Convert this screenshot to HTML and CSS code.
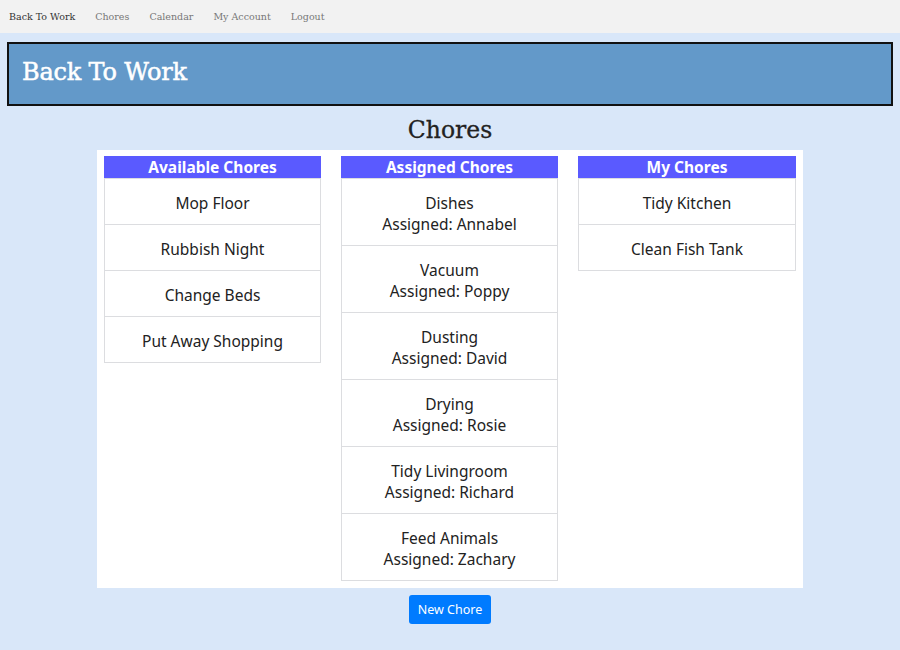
FILE: index.html
```html
<!DOCTYPE html>
<html lang="en">
<head>
<meta charset="utf-8">
<title>Back To Work</title>
<link rel="stylesheet" href="styles.css">
</head>
<body>
<nav class="navbar">
  <a class="brand" href="#">Back To Work</a>
  <a class="nav-link" href="#">Chores</a>
  <a class="nav-link" href="#">Calendar</a>
  <a class="nav-link" href="#">My Account</a>
  <a class="nav-link" href="#">Logout</a>
</nav>
<header class="banner">
  <h1>Back To Work</h1>
</header>
<h2 class="page-title">Chores</h2>
<main class="board">
  <section class="column">
    <h3 class="col-head">Available Chores</h3>
    <ul class="list">
      <li>Mop Floor</li>
      <li>Rubbish Night</li>
      <li>Change Beds</li>
      <li>Put Away Shopping</li>
    </ul>
  </section>
  <section class="column">
    <h3 class="col-head">Assigned Chores</h3>
    <ul class="list">
      <li>Dishes<br>Assigned: Annabel</li>
      <li>Vacuum<br>Assigned: Poppy</li>
      <li>Dusting<br>Assigned: David</li>
      <li>Drying<br>Assigned: Rosie</li>
      <li>Tidy Livingroom<br>Assigned: Richard</li>
      <li>Feed Animals<br>Assigned: Zachary</li>
    </ul>
  </section>
  <section class="column">
    <h3 class="col-head">My Chores</h3>
    <ul class="list">
      <li>Tidy Kitchen</li>
      <li>Clean Fish Tank</li>
    </ul>
  </section>
</main>
<div class="actions">
  <button class="btn" type="button">New Chore</button>
</div>
</body>
</html>
```
FILE: styles.css
```css
* { box-sizing: border-box; }
html, body { margin: 0; padding: 0; }
body {
  background: #d9e7f9;
  font-family: "Noto Sans", "Open Sans", sans-serif;
  color: #212529;
  width: 900px;
  height: 650px;
  overflow: hidden;
}
.navbar {
  display: flex;
  align-items: center;
  height: 33px;
  background: #f2f2f2;
  padding: 0 9px;
  gap: 20px;
  font-family: "DejaVu Serif", serif;
  font-size: 9.5px;
}
.navbar a { text-decoration: none; color: #777; }
.navbar .brand { color: #333; }
.banner {
  margin: 9px 7px 0 7px;
  height: 64px;
  border: 2px solid #111;
  background: #6399c9;
  display: flex;
  align-items: center;
  padding-left: 13px;
  padding-bottom: 4px;
}
.banner h1 {
  margin: 0;
  font-family: "DejaVu Serif", serif;
  font-weight: normal;
  color: #fff;
  font-size: 24px;
  letter-spacing: -0.2px;
  -webkit-text-stroke: 0.5px #fff;
}
.page-title {
  margin: 6px 0 0;
  height: 38px;
  text-align: center;
  font-family: "DejaVu Serif", serif;
  font-weight: normal;
  font-size: 23.5px;
  color: #222;
  line-height: 36px;
  -webkit-text-stroke: 0.3px #222;
}
.board {
  width: 706px;
  margin: 0 auto;
  background: #fff;
  padding: 6px 7px 7px;
  display: grid;
  grid-template-columns: 217px 217px 218px;
  gap: 20px;
  align-items: start;
}
.col-head {
  margin: 0;
  height: 22px;
  background: #5a5aff;
  color: #fff;
  font-size: 15.5px;
  font-weight: bold;
  text-align: center;
  line-height: 23px;
}
.list {
  list-style: none;
  margin: 0;
  padding: 0;
}
.list li {
  border: 1px solid #dcdde0;
  margin-top: -1px;
  padding: 14px 8px 10px;
  text-align: center;
  font-size: 15.5px;
  line-height: 21px;
  color: #222;
}
.list li:first-child { margin-top: 0; }
.actions {
  display: flex;
  justify-content: center;
  padding-top: 7px;
}
.btn {
  background: #007bff;
  color: #fff;
  border: none;
  border-radius: 3px;
  font-family: "Noto Sans", sans-serif;
  font-size: 12.5px;
  width: 82px;
  height: 29px;
  padding: 0;
}
```
